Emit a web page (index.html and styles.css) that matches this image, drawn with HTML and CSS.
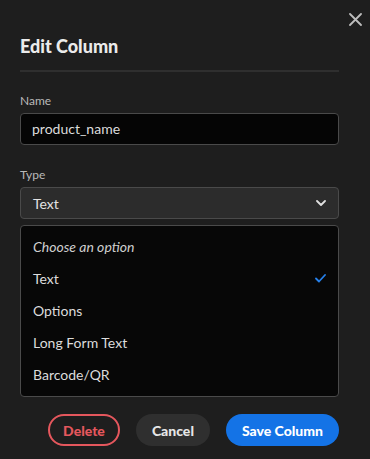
FILE: index.html
```html
<!DOCTYPE html>
<html lang="en">
<head>
  <meta charset="UTF-8">
  <title>Edit Column</title>
  <link rel="stylesheet" href="styles.css">
</head>
<body>

<div class="dialog">
  <button class="close-btn" aria-label="Close">
    <svg width="13" height="13" viewBox="0 0 13 13"><path d="M1 1 L12 12 M12 1 L1 12" stroke="#bdbdbd" stroke-width="1.8" stroke-linecap="round"/></svg>
  </button>

  <h2 class="title">Edit Column</h2>
  <div class="divider"></div>

  <div class="field">
    <label class="label">Name</label>
    <div class="input">product_name</div>
  </div>

  <div class="field">
    <label class="label">Type</label>
    <div class="select">
      <span>Text</span>
      <svg width="10" height="6" viewBox="0 0 10 6"><path d="M1 1 L5 5 L9 1" fill="none" stroke="#e0e0e0" stroke-width="1.8" stroke-linecap="round" stroke-linejoin="round"/></svg>
    </div>
    <ul class="menu">
      <li class="menu-item placeholder">Choose an option</li>
      <li class="menu-item selected">Text
        <svg width="11" height="9" viewBox="0 0 11 9"><path d="M1 4.5 L4 7.5 L10 1" fill="none" stroke="#2680eb" stroke-width="1.8" stroke-linecap="round" stroke-linejoin="round"/></svg>
      </li>
      <li class="menu-item">Options</li>
      <li class="menu-item">Long Form Text</li>
      <li class="menu-item">Barcode/QR</li>
    </ul>
  </div>

  <div class="actions">
    <button class="btn btn-delete">Delete</button>
    <button class="btn btn-cancel">Cancel</button>
    <button class="btn btn-save">Save Column</button>
  </div>
</div>

</body>
</html>
```

FILE: styles.css
```css
html, body {
  margin: 0;
  padding: 0;
  background-color: #1e1e1e;
  font-family: 'Lato', 'Liberation Sans', sans-serif;
  color: #e3e3e3;
}

.dialog {
  position: relative;
  padding: 33px 31px 12px 20px;
}

.close-btn {
  position: absolute;
  top: 13px;
  right: 8px;
  width: 13px;
  height: 13px;
  padding: 0;
  border: none;
  background: none;
  display: flex;
}

.title {
  margin: 0;
  font-size: 18px;
  line-height: 26px;
  font-weight: 900;
  color: #ebebeb;
}

.divider {
  height: 2px;
  background-color: #2f2f2f;
  margin-top: 11px;
  margin-bottom: 21px;
}

.field {
  margin-bottom: 22px;
}

.label {
  display: block;
  font-size: 12px;
  line-height: 16px;
  color: #b9b9b9;
  margin-bottom: 4px;
}

.input {
  height: 30px;
  box-sizing: content-box;
  border: 1px solid #4a4a4a;
  border-radius: 4px;
  background-color: #050505;
  padding: 0 11px;
  font-size: 14px;
  line-height: 30px;
  color: #dcdcdc;
}

.select {
  height: 30px;
  border: 1px solid #4a4a4a;
  border-radius: 4px;
  background-color: #2c2c2c;
  padding: 0 12px;
  display: flex;
  align-items: center;
  justify-content: space-between;
  font-size: 14px;
  color: #e3e3e3;
}

.menu {
  list-style: none;
  margin: 6px 0 0;
  padding: 4px 0 6px;
  border: 1px solid #4a4a4a;
  border-radius: 4px;
  background-color: #070707;
}

.menu-item {
  height: 32px;
  padding: 0 12px;
  display: flex;
  align-items: center;
  justify-content: space-between;
  font-size: 14px;
  color: #dcdcdc;
}

.placeholder {
  font-style: italic;
  color: #cfcfcf;
}

.actions {
  display: flex;
  justify-content: flex-end;
  gap: 16px;
  margin-top: -5px;
}

.btn {
  height: 32px;
  border-radius: 16px;
  font-family: inherit;
  font-size: 14px;
  font-weight: 900;
  padding: 0 16px;
  border: none;
  cursor: pointer;
}

.btn-delete {
  background: none;
  border: 2px solid #e5575d;
  color: #e5575d;
  padding: 0 13px;
}

.btn-cancel {
  background-color: #2f2f2f;
  color: #e6e6e6;
}

.btn-save {
  background-color: #1473e6;
  color: #ffffff;
}
```
